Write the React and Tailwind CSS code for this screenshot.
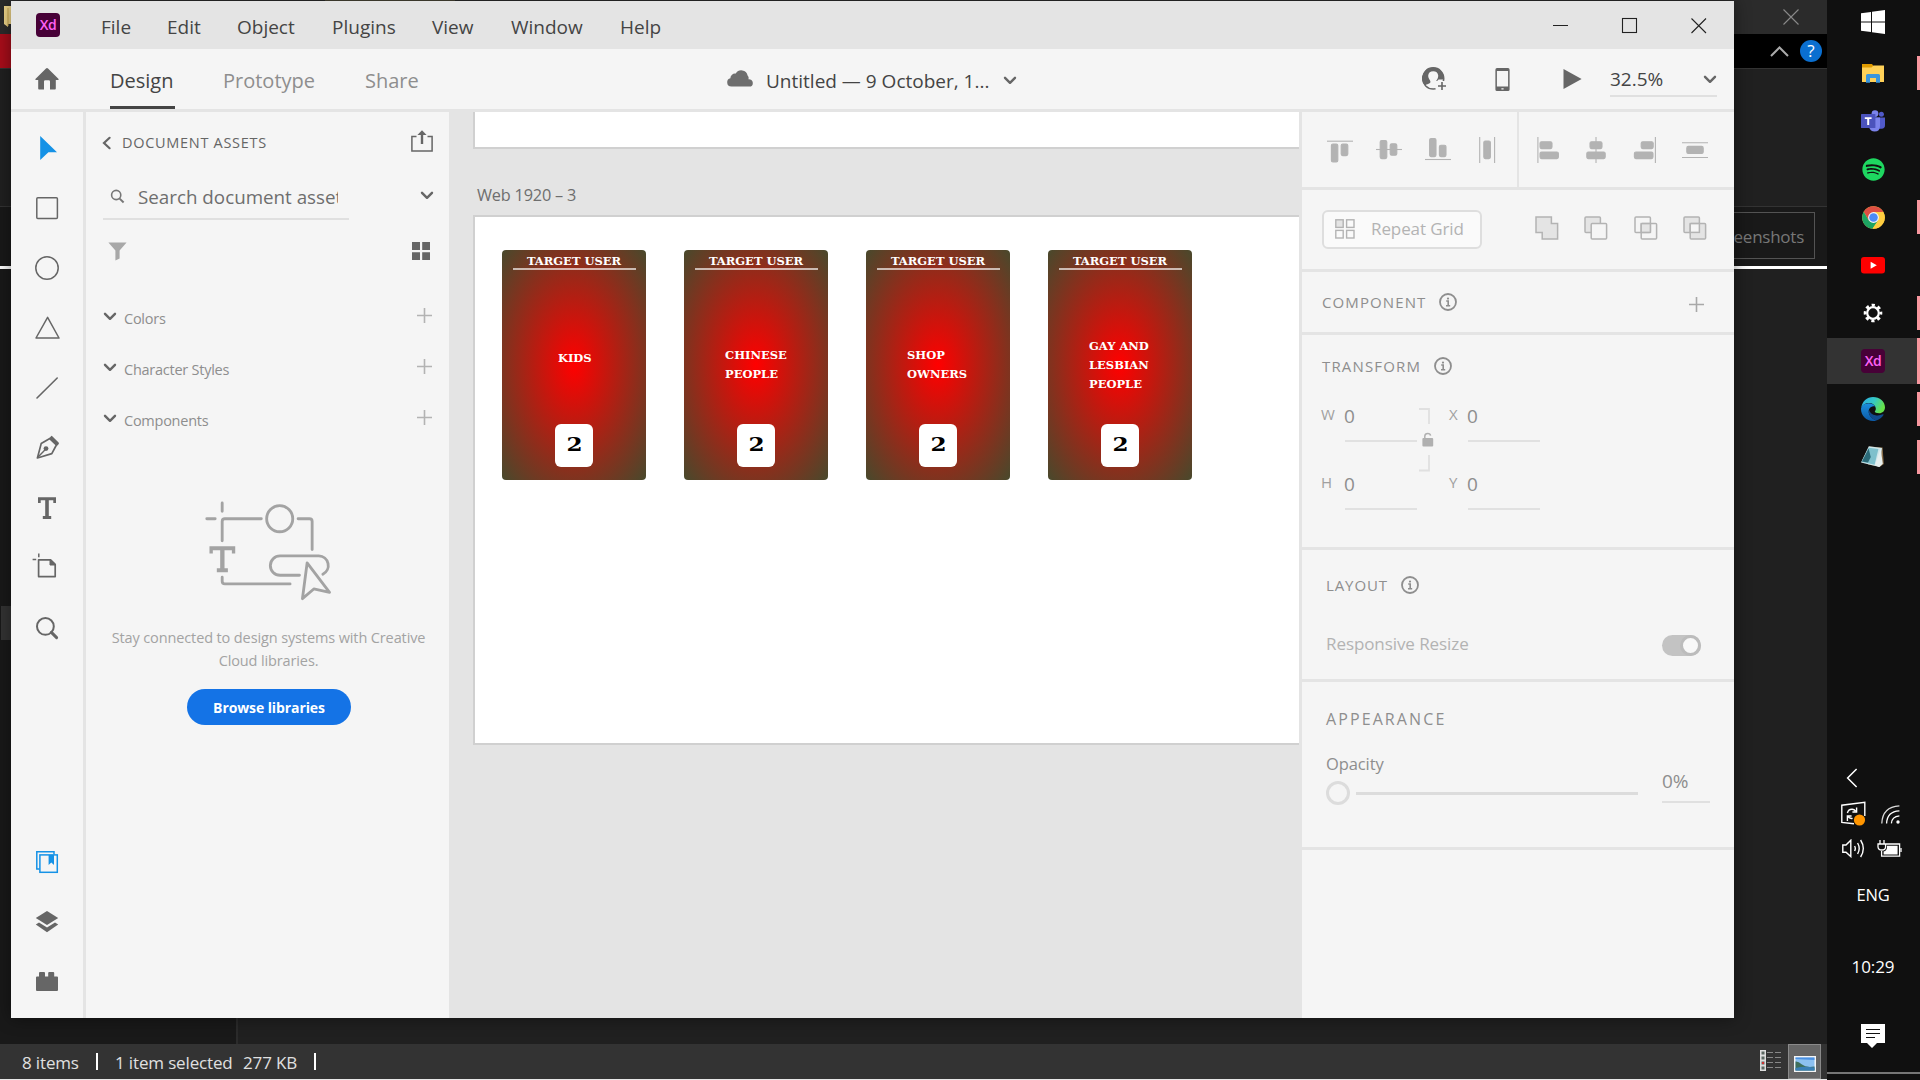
import React from 'react';
import { FaSpotify } from 'react-icons/fa';

const Chevron = ({ className }) => (
  <svg className={className} width="14" height="9" viewBox="0 0 14 9" fill="none" stroke="#666" strokeWidth="2.4" strokeLinecap="round" strokeLinejoin="round">
    <path d="M2 1.8 7 6.8 12 1.8" />
  </svg>
);

const Plus = ({ className, color = '#b3b3b3' }) => (
  <svg className={className} width="15" height="15" viewBox="0 0 15 15" stroke={color} strokeWidth="1.6">
    <path d="M7.5 0V15M0 7.5H15" />
  </svg>
);

const Info = () => (
  <svg width="18" height="18" viewBox="0 0 18 18" fill="none">
    <circle cx="9" cy="9" r="8" stroke="#8e8e8e" strokeWidth="1.8" />
    <circle cx="9" cy="5.6" r="1.1" fill="#8e8e8e" />
    <path d="M7.2 8H9.2V12.6M7 12.8H11.2" stroke="#8e8e8e" strokeWidth="1.6" />
  </svg>
);

const XdIcon = () => (
  <div className="flex h-6 w-6 shrink-0 items-center justify-center rounded-[4px] bg-[#470137] text-[14px] leading-none font-semibold tracking-[-0.4px] text-[#ff61f6]">
    <span className="-mt-px">Xd</span>
  </div>
);

/* ---------- tool column ---------- */
const s = { fill: 'none', stroke: '#666', strokeWidth: 1.5 };
const TOOLS = [
  <path d="M8.2 3 25 19.2H16.4L8.2 27Z" fill="#1592e6" />,
  <rect x="4.8" y="4.8" width="20.6" height="20.6" rx="1" {...s} />,
  <circle cx="15" cy="15" r="11.2" {...s} />,
  <path d="M15.6 4.4 27 25H4Z" {...s} strokeLinejoin="round" />,
  <path d="M5 25 25.2 5" {...s} strokeWidth="1.6" strokeLinecap="round" />,
  <g transform="translate(0 -1)">
    <path d="M5.4 26 9.2 11.6 17.8 6.6 24.4 13 19.8 21.6Z" {...s} strokeWidth="1.7" strokeLinejoin="round" />
    <path d="M5.6 25.6 13.6 17.2" {...s} strokeWidth="1.4" />
    <circle cx="14" cy="16.6" r="2.4" fill="#666" />
    <path d="M20 4 26.6 10.4Q27.4 11.2 26.6 12.2L24.8 14 17 6.4 18.8 4.4Q19.6 3.6 20 4Z" fill="#666" />
  </g>,
  <path d="M6 4.2H24V10H21.3V7.2H16.8V23H19.2V26H10.8V23H13.2V7.2H8.7V10H6Z" fill="#666" />,
  <g transform="translate(0 -2)">
    <path d="M6.6 8.8H18.6L23.2 13.4V25.6H6.6Z" {...s} strokeWidth="1.7" strokeLinejoin="round" />
    <path d="M18 8.4V14H23.8Z" fill="#666" stroke="#666" />
    <path d="M6.8 2.4V6.2M0.6 8.4H4.2" {...s} />
  </g>,
  <g>
    <circle cx="13.4" cy="13.4" r="8.4" {...s} strokeWidth="2" />
    <path d="M19.4 19.4 24.6 24.6" {...s} strokeWidth="3" strokeLinecap="round" />
  </g>,
];
const BOTTOM_TOOLS = [
  <g fill="none" stroke="#1592e6" strokeWidth="1.5">
    <path d="M7.6 22H4.8V4.8H22V7.6" />
    <rect x="7.9" y="7.9" width="17.4" height="17.4" />
    <path d="M16.6 8H22V18L19.3 15.6 16.6 18Z" fill="#1592e6" stroke="none" />
  </g>,
  <g fill="#666">
    <path d="M15 4 26.2 11 15 18 3.8 11Z" />
    <path d="M3.8 17.4 7 15.4 15 20.6 23 15.4 26.2 17.4 15 25.2Z" />
  </g>,
  <path d="M4 10.5Q4 9.5 5 9.5H7V6Q7 5 8 5H12Q13 5 13 6V9.5H16.2V6Q16.2 5 17.2 5H21.2Q22.2 5 22.2 6V9.5H25Q26 9.5 26 10.5V23Q26 24 25 24H5Q4 24 4 23Z" fill="#666" />,
];
const ToolCell = ({ children }) => (
  <div className="flex h-[60px] items-center justify-center">
    <svg width="30" height="30" viewBox="0 0 30 30">{children}</svg>
  </div>
);

/* ---------- alignment icons ---------- */
const ALIGN_V = [
  <g><path d="M0 4.2H26" /><rect x="4.4" y="7" width="6.4" height="18" rx="1.5" /><rect x="14.2" y="7" width="6.6" height="11.6" rx="1.5" /></g>,
  <g><path d="M0 12.5H26" /><rect x="4.2" y="3.6" width="6.6" height="18" rx="1.5" /><rect x="14.2" y="6.8" width="6.6" height="11.4" rx="1.5" /></g>,
  <g><path d="M0 22.5H26" /><rect x="4.6" y="1.6" width="6.4" height="18" rx="1.5" /><rect x="14.4" y="8.2" width="6.6" height="11.4" rx="1.5" /></g>,
  <g><path d="M5.7 0V26M20.6 0V26" /><rect x="9.8" y="4" width="6.6" height="17.6" rx="1.5" /></g>,
];
const ALIGN_H = [
  <g><path d="M2.9 0V26" /><rect x="5" y="4.8" width="12" height="6.8" rx="1.5" /><rect x="5" y="15" width="18.4" height="6.6" rx="1.5" /></g>,
  <g><path d="M12 0V26" /><rect x="6" y="4.8" width="12" height="6.8" rx="1.5" /><rect x="2.8" y="15" width="18.4" height="6.6" rx="1.5" /></g>,
  <g><path d="M22.4 0V26" /><rect x="8.2" y="4.8" width="12" height="6.8" rx="1.5" /><rect x="1.4" y="15" width="18.6" height="6.6" rx="1.5" /></g>,
  <g><path d="M0 5.8H26M0 20.5H26" /><rect x="4.8" y="9.4" width="16.4" height="7" rx="1.5" /></g>,
];
const AlignCell = ({ children }) => (
  <div className="flex w-[49px] items-center justify-center">
    <svg width="26" height="26" viewBox="0 0 26 26" fill="#b3b3b3" stroke="#b3b3b3" strokeWidth="1.1">
      {children}
    </svg>
  </div>
);

const BOOL = [
  <path d="M1 1H16.4V7.6H22.6V23H7.2V16.4H1Z" fill="#e4e4e4" />,
  <g><rect x="1" y="1" width="15.4" height="15.4" rx="1" fill="#e4e4e4" /><rect x="7.2" y="7.6" width="15.4" height="15.4" rx="1" fill="#f5f5f5" /></g>,
  <g><rect x="1" y="1" width="15.4" height="15.4" rx="1" /><rect x="7.2" y="7.6" width="15.4" height="15.4" rx="1" /><rect x="7.2" y="7.6" width="9.2" height="8.8" fill="#e4e4e4" /></g>,
  <g><rect x="1" y="1" width="15.4" height="15.4" rx="1" fill="#e4e4e4" /><rect x="7.2" y="7.6" width="15.4" height="15.4" rx="1" fill="#e4e4e4" /><rect x="7.2" y="7.6" width="9.2" height="8.8" fill="#f5f5f5" /></g>,
];

/* ---------- artboard cards ---------- */
const CARDS = [
  { lines: ['KIDS'], pos: 'mt-[79px] ml-[56px]' },
  { lines: ['CHINESE', 'PEOPLE'], pos: 'mt-[76px] ml-[41px]' },
  { lines: ['SHOP', 'OWNERS'], pos: 'mt-[76px] ml-[41px]' },
  { lines: ['GAY AND', 'LESBIAN', 'PEOPLE'], pos: 'mt-[67px] ml-[41px]' },
];
const Card = ({ lines, pos }) => (
  <div className="flex h-[230px] w-36 flex-col rounded-[4px] bg-[radial-gradient(ellipse_farthest-corner_at_center,#ff0000,#48492c)] font-['DejaVu_Serif',serif] text-[11.5px] font-bold text-white">
    <div className="h-[18px] text-center leading-[22px] whitespace-nowrap">TARGET USER</div>
    <div className="mx-auto h-0.5 w-[123px] shrink-0 bg-white/65" />
    <div className={pos}>
      {lines.map((l) => (
        <div key={l} className="leading-[19px] whitespace-nowrap">{l}</div>
      ))}
    </div>
    <div className="mx-auto mt-auto mb-[13px] flex h-[43px] w-[38px] shrink-0 items-center justify-center rounded-[6px] bg-white pb-px text-[18.5px] text-black">
      <span className="scale-x-125 leading-none">2</span>
    </div>
  </div>
);

const Field = ({ label, first }) => (
  <div className="flex h-[68px]">
    <span className={`${first ? 'w-6' : 'w-[19px]'} pt-[4px] text-[15px] leading-[18px] text-[#a0a0a0]`}>{label}</span>
    <span className="h-[41px] w-[72px] border-b-2 border-[#e1e1e1] pt-[5px] text-[19px] leading-5 text-[#8e8e8e]"><span className="-ml-px">0</span></span>
  </div>
);

function TitleBar() {
  return (
    <div className="flex h-12 shrink-0 items-start bg-[#e4e4e4] text-[19px] leading-[52px] text-[#444]">
      <div className="ml-[25px] flex h-12 w-[65px] items-center"><XdIcon /></div>
      <span className="w-[66px]">File</span>
      <span className="w-[70px]">Edit</span>
      <span className="w-[95px]">Object</span>
      <span className="w-[100px]">Plugins</span>
      <span className="w-[79px]">View</span>
      <span className="w-[109px]">Window</span>
      <span>Help</span>
      <svg className="mt-4 mr-[27px] ml-auto" width="156" height="18" viewBox="0 0 156 18" fill="none" stroke="#222" strokeWidth="1.1">
        <path d="M2 8.5H17M140.5 1.5 155 16M155 1.5 140.5 16" />
        <rect x="71.5" y="1.5" width="14" height="14" />
      </svg>
    </div>
  );
}

function Toolbar() {
  return (
    <div className="flex h-[63px] shrink-0 border-b-[3px] border-[#e4e4e4] bg-[#f5f5f5] text-[20px] text-[#8e8e8e]">
      <svg className="mt-[19px] ml-6 shrink-0" width="24" height="22" viewBox="0 0 24 22" fill="#666">
        <path d="M12 0Q12.6 0 13 .5L23.6 11Q24 11.800 23 12H20.800V20.500Q20.800 21.400 20 21.400H15V13.400Q15 12.200 13.800 12.200H10.200Q9 12.200 9 13.400V21.400H4Q3.200 21.400 3.200 20.500V12H1Q0 11.800.4 11L11 .5Q11.400 0 12 0Z" />
      </svg>
      <div className="ml-[51px] h-[60px] w-[65px] border-b-[3px] border-[#444] leading-[64px] whitespace-nowrap text-[#444]">Design</div>
      <span className="ml-[48px] w-[142px] leading-[64px]">Prototype</span>
      <span className="w-[53px] leading-[64px]">Share</span>
      <svg className="mt-[20px] ml-[309px] shrink-0" width="26" height="18" viewBox="0 0 26 18" fill="#6e6e6e">
        <path d="M4.5 17.6A4.4 4.4 0 0 1 .2 13.2 4 4 0 0 1 3.4 9.2 4.6 4.6 0 0 1 8.8 4.6 6.4 6.4 0 0 1 20.6 6.4 3.6 3.6 0 0 1 21.4 10.2 3.8 3.8 0 0 1 25.8 13.8 3.6 3.6 0 0 1 22.4 17.6Z" />
      </svg>
      <span className="ml-[13px] w-[237px] text-[19px] leading-[64px] whitespace-nowrap text-[#444]">Untitled — 9 October, 1...</span>
      <Chevron className="mt-[27px]" />
      <svg className="mt-[18px] ml-auto shrink-0" width="25" height="24" viewBox="0 0 25 24" fill="#666">
        <circle cx="11.2" cy="11.4" r="10.6" fill="none" stroke="#666" strokeWidth="1.4" />
        <path fillRule="evenodd" d="M11.2.6A10.8 10.8 0 0 1 21.9 12.5H16.5L14 15.2C13.6 13.4 16.4 12.4 16.2 8.6 16 5.6 14 4.2 11.2 4.2S6.4 5.6 6.2 8.6C6.2 12.4 8.8 13.4 8.4 15.2 8 16.8 4.8 17 2.9 18.4A10.8 10.8 0 0 1 11.2.6Z" />
        <path d="M12 14H25V24H14Z" fill="#f5f5f5" />
        <path d="M20 15V23M16 19H24" stroke="#666" strokeWidth="1.6" />
      </svg>
      <svg className="mt-[19px] ml-12 shrink-0" width="15" height="24" viewBox="0 0 15 24">
        <path fillRule="evenodd" fill="#666" d="M2 0H13Q14.6 0 14.6 1.8V21.4Q14.6 23 13 23H2Q.4 23 .4 21.4V1.8Q.4 0 2 0ZM1.9 3V18.6H13.1V3ZM6.4 20.2V21.6H8.6V20.2Z" />
      </svg>
      <svg className="mt-5 ml-[53px] shrink-0" width="19" height="20" viewBox="0 0 19 20"><path d="M.5 0 18.6 10 .5 20Z" fill="#666" /></svg>
      <div className="mr-[17px] ml-[28px] flex h-12 w-[107px] border-b-2 border-[#e0e0e0] text-[19px] text-[#444]">
        <span className="leading-[60px]">32.5%</span>
        <Chevron className="mt-[26px] ml-auto" />
      </div>
    </div>
  );
}

function AssetsPanel() {
  return (
    <div className="flex w-[363px] shrink-0 flex-col bg-[#f5f5f5] pr-4 pl-[17px] text-[#8e8e8e]">
      <div className="flex h-[62px] items-center">
        <svg className="-ml-px" width="10" height="14" viewBox="0 0 10 14" fill="none" stroke="#666" strokeWidth="2.2" strokeLinecap="round"><path d="M7.6 1.8 2 7 7.6 12.2" /></svg>
        <span className="ml-[10px] text-[14.5px] tracking-[0.7px] text-[#666]">DOCUMENT ASSETS</span>
        <svg className="-mt-1 ml-auto" width="22" height="22" viewBox="0 0 22 22" fill="none" stroke="#666" strokeWidth="1.5">
          <path d="M5.5 6.4H.9V20.9H21.1V6.4H16.5" />
          <path d="M11 14V4" strokeWidth="2.4" />
          <path d="M11 .2 15.6 5H6.4Z" fill="#666" stroke="none" />
        </svg>
      </div>
      <div className="flex h-[46px]">
        <div className="flex w-[246px] border-b-2 border-[#e0e0e0]">
          <svg className="mt-[15px] ml-[7px] shrink-0" width="15" height="15" viewBox="0 0 15 15" fill="none" stroke="#777" strokeWidth="1.6"><circle cx="6.2" cy="6" r="4.6" /><path d="M9.6 9.6 13.6 13.4" strokeWidth="2" /></svg>
          <span className="ml-[13px] w-[200px] overflow-hidden text-[18.8px] leading-[46px] whitespace-nowrap text-[#6e6e6e]">Search document assets</span>
        </div>
        <Chevron className="-mr-px mt-[17px] ml-auto" />
      </div>
      <div className="flex h-[62px] items-center justify-between pr-[3px] pl-[5px]">
        <svg width="19" height="19" viewBox="0 0 19 19"><path d="M.4.4H18.6L11.6 8.6V16.6L7.4 18.6V8.6Z" fill="#a8a8a8" /></svg>
        <svg className="-mt-px" width="18" height="18" viewBox="0 0 18 18" fill="#666"><path d="M0 0H8V8H0ZM10.2 0H18V8H10.2ZM0 10.2H8V18H0ZM10.2 10.2H18V18H10.2Z" /></svg>
      </div>
      <div className="mt-[11px]">
        {['Colors', 'Character Styles', 'Components'].map((t) => (
          <div key={t} className="flex h-[51px] items-center">
            <Chevron className="-mt-[5px]" />
            <span className="ml-[7px] text-[14.5px] tracking-[-0.25px]">{t}</span>
            <Plus className="mr-px -mt-[6px] ml-auto" />
          </div>
        ))}
      </div>
      <svg className="mt-[54px] ml-[101px] shrink-0" width="129" height="102" viewBox="610 600 385 305" fill="none" stroke="#a3a3a3" strokeWidth="8.5" strokeLinecap="round" strokeLinejoin="round">
        <path d="M664 609V634M618 656H643M664 722V664Q664 656 672 656H781M891 656H925Q933 656 933 664V748M664 831V843Q664 851 672 851H867" />
        <circle cx="836" cy="656" r="39" />
        <path d="M895 825H837A29 29 0 0 1 837 767H953A29 29 0 0 1 965 822" />
        <path d="M918 788 985 876 938 866 904 895Z" />
        <path d="M626 738H703V760H693V750H671V804H681V816H648V804H658V750H636V760H626Z" fill="#a3a3a3" stroke="none" />
      </svg>
      <div className="mt-[24px] -mr-[5px] -ml-1 text-center text-[14.5px] leading-[23px] tracking-[-0.12px] whitespace-nowrap text-[#a3a3a3]">
        <div>Stay connected to design systems with Creative</div>
        <div>Cloud libraries.</div>
      </div>
      <div className="mt-[17px] ml-[84px] h-9 w-[164px] shrink-0 rounded-full bg-[#1473e6] text-center text-[14px] leading-[37px] font-bold tracking-[-0.1px] text-white">Browse libraries</div>
    </div>
  );
}

function Canvas() {
  return (
    <div className="w-[850px] shrink-0 overflow-hidden bg-[#e4e4e4] pl-6">
      <div className="h-[37px] w-[826px] border-b-2 border-l-2 border-[#d0d0d0] bg-white" />
      <div className="h-[66px] pt-[34px] pl-[4px] text-[16.3px] leading-6 tracking-[-0.2px] text-[#6e6e6e]">Web 1920 – 3</div>
      <div className="h-[530px] w-[826px] border-y-2 border-l-2 border-[#d0d0d0] bg-white">
        <div className="flex gap-[38px] pt-[33px] pl-[27px]">
          {CARDS.map((c) => <Card key={c.lines.join()} {...c} />)}
        </div>
      </div>
    </div>
  );
}

function Inspector() {
  return (
    <div className="flex w-[435px] shrink-0 flex-col border-l-[3px] border-[#e4e4e4] bg-[#f5f5f5] text-[#8e8e8e]">
      <div className="flex h-[78px] border-b-[3px] border-[#e4e4e4]">
        <div className="flex w-[217px] border-r-2 border-[#e4e4e4] pl-[13px]">{ALIGN_V.map((a, i) => <AlignCell key={i}>{a}</AlignCell>)}</div>
        <div className="flex pl-[4px]">{ALIGN_H.map((a, i) => <AlignCell key={i}>{a}</AlignCell>)}</div>
      </div>
      <div className="flex h-[82px] items-start border-b-[3px] border-[#e4e4e4] pt-5 pl-5">
        <div className="flex h-[39px] w-[160px] items-center rounded-[6px] border-2 border-[#dedede] bg-[#fafafa] pb-[2px] pl-[11px]">
          <svg width="20" height="20" viewBox="0 0 20 20" fill="none" stroke="#b3b3b3" strokeWidth="1.4">
            <rect x=".8" y=".8" width="7.4" height="7.6" fill="#e4e4e4" /><rect x="11.6" y=".8" width="7.4" height="7.6" /><rect x=".8" y="11.4" width="7.4" height="7.6" /><rect x="11.6" y="11.4" width="7.4" height="7.6" />
          </svg>
          <span className="ml-4 text-[17px] tracking-[-0.1px] whitespace-nowrap text-[#b3b3b3]">Repeat Grid</span>
        </div>
        <div className="mt-[6px] ml-[53px] flex gap-[25.3px]">
          {BOOL.map((b, i) => (
            <svg key={i} width="24" height="24" viewBox="0 0 24 24" fill="none" stroke="#b3b3b3" strokeWidth="1.5">{b}</svg>
          ))}
        </div>
      </div>
      <div className="flex h-[63px] items-center border-b-[3px] border-[#e4e4e4] pr-[30px] pl-5">
        <span className="mr-[13px] text-[15px] tracking-[1.1px]">COMPONENT</span>
        <Info />
        <Plus className="mt-1 ml-auto" color="#a8a8a8" />
      </div>
      <div className="h-[215px] border-b-[3px] border-[#e4e4e4] pl-5">
        <div className="flex h-[62px] items-center">
          <span className="mr-[13px] text-[15px] tracking-[1.15px]">TRANSFORM</span>
          <Info />
        </div>
        <div className="flex pt-[4px]">
          <div className="-ml-px"><Field label="W" first /><Field label="H" first /></div>
          <svg className="mt-[7px] mr-[15px] ml-[2px] shrink-0" width="15" height="66" viewBox="0 0 15 66" fill="none">
            <path d="M0 1H10V16M10 47V62.500H0" stroke="#e0e0e0" strokeWidth="1.8" />
            <rect x="3.4" y="30" width="10.8" height="8.4" rx="1" fill="#b0b0b0" />
            <path d="M5.8 31V28Q6 25.6 8.8 25.6 11.2 25.6 11.6 27.6" stroke="#b0b0b0" strokeWidth="1.5" />
          </svg>
          <div><Field label="X" /><Field label="Y" /></div>
        </div>
      </div>
      <div className="h-[132px] border-b-[3px] border-[#e4e4e4] pr-[33px] pl-6">
        <div className="flex h-[70px] items-center">
          <span className="mr-[13px] text-[15px] tracking-[0.9px]">LAYOUT</span>
          <Info />
        </div>
        <div className="flex h-12 items-center justify-between">
          <span className="text-[17px] tracking-[-0.08px] text-[#b3b3b3]">Responsive Resize</span>
          <div className="mt-[3px] flex h-[21px] w-[39px] justify-end rounded-full bg-[#c3c3c3]">
            <div className="h-[21px] w-[21px] rounded-full border-[3px] border-[#bcbcbc] bg-[#f8f8f8]" />
          </div>
        </div>
      </div>
      <div className="h-[168px] border-b-[3px] border-[#e4e4e4] pl-6">
        <div className="pt-[25px] text-[16px] leading-6 tracking-[2.1px]">APPEARANCE</div>
        <div className="mt-[16px] flex">
          <div className="w-[312px]">
            <div className="pt-[5px] text-[16.5px] leading-6 tracking-[-0.1px]">Opacity</div>
            <div className="mt-[5px] flex items-center">
              <div className="h-6 w-6 rounded-full border-[3px] border-[#dcdcdc]" />
              <div className="mt-px ml-[6px] h-[3px] w-[282px] bg-[#dcdcdc]" />
            </div>
          </div>
          <div className="ml-6 h-14 w-12 border-b-2 border-[#e0e0e0] pt-[22px] text-[19px] leading-6">0%</div>
        </div>
      </div>
    </div>
  );
}

/* ---------- desktop taskbar ---------- */
const APPS = [
  { n: 'files', bar: true, icon: (
    <svg width="24" height="24" viewBox="0 0 24 24"><path d="M1 3H11L12.5 5V8H1Z" fill="#e09b00" /><path d="M1 6.5H10.5L12.5 4.5H23V21H1Z" fill="#ffd158" /><path d="M5 21.8V14.5Q5 13 6.5 13H17.5Q19 13 19 14.5V21.8H15V17H9V21.8Z" fill="#3a96dd" /></svg>) },
  { n: 'teams', icon: (
    <svg width="24" height="24" viewBox="0 0 24 24"><circle cx="14" cy="4.6" r="3.4" fill="#7b83eb" /><circle cx="20.4" cy="5.2" r="2.5" fill="#5059c9" /><path d="M14 8.6H24V16Q24 19.8 20.6 19.8H14Z" fill="#5059c9" /><path d="M8 8.6H19V17Q19 22.6 13.6 22.6 9.4 22.6 8 18Z" fill="#7b83eb" /><rect x="0" y="5" width="14.4" height="14" rx=".6" fill="#4b53bc" /><path d="M3.8 8.2H10.6V10H8.2V16H6.2V10H3.8Z" fill="#fff" /></svg>) },
  { n: 'spotify', icon: <FaSpotify className="h-[23px] w-[23px] text-[#1ed760]" /> },
  { n: 'chrome', bar: true, icon: (
    <svg width="23" height="23" viewBox="0 0 23 23"><circle cx="11.5" cy="11.5" r="11.3" fill="#ffcd40" /><path d="M1.7 5.8A11.3 11.3 0 0 1 21.3 6H11.5L6.7 14.2Z" fill="#de4f43" /><path d="M1.7 5.8A11.3 11.3 0 0 0 10.4 22.8L16.3 14.3 6.7 14.2Z" fill="#1da462" /><path d="M11.5 6H21.3A11.3 11.3 0 0 1 10.6 22.8L16.3 14.2Z" fill="#ffcd40" /><circle cx="11.5" cy="11.5" r="5.4" fill="#f4f4f4" /><circle cx="11.5" cy="11.5" r="4.3" fill="#4c8bf5" /></svg>) },
  { n: 'youtube', icon: (
    <svg width="24" height="17" viewBox="0 0 24 17"><rect width="24" height="16.6" rx="3" fill="#f00" /><path d="M9.6 4.8 15.8 8.3 9.6 11.8Z" fill="#fff" /></svg>) },
  { n: 'settings', bar: true, icon: (
    <svg width="20" height="20" viewBox="0 0 20 20" fill="none" stroke="#fff"><circle cx="10" cy="10" r="5.8" strokeWidth="2.2" /><circle cx="10" cy="10" r="7.9" strokeWidth="2.8" strokeDasharray="3.2 3.005" strokeDashoffset="1.6" /></svg>) },
  { n: 'xd', bar: true, active: true, icon: <XdIcon /> },
  { n: 'edge', bar: true, icon: (
    <svg width="24" height="24" viewBox="0 0 24 24">
      <defs>
        <linearGradient id="eg" x1="0" y1="0" x2="1" y2=".4"><stop offset="0" stopColor="#2aa8e8" /><stop offset=".55" stopColor="#35c9c4" /><stop offset="1" stopColor="#66e24a" /></linearGradient>
        <linearGradient id="eb" x1="0" y1="0" x2="0" y2="1"><stop offset="0" stopColor="#1b8fe0" /><stop offset="1" stopColor="#0c59a4" /></linearGradient>
      </defs>
      <path d="M.3 10.6C1 4.6 6 0 12 0 18.8 0 24 4.6 24 10.2 24 14 21.4 16.2 18.2 16.2 15.4 16.2 13.6 15.2 13.8 14.2 14.6 13.4 14.9 12.4 14.8 11.4 14.4 8 11.2 6 7.8 6 4.6 6 1.6 7.8.3 10.6Z" fill="url(#eg)" />
      <path d="M0 12C0 9 3.4 6.2 7.6 6.2 10.6 6.2 13.2 7.6 14.3 9.6 12.6 8.6 9.6 9.2 8.2 12 6.4 16 9.4 21.6 15.4 23.4 14.3 23.8 13.2 24 12 24 5.4 24 0 18.6 0 12Z" fill="url(#eb)" />
      <path d="M8 12.4C6.8 17 10.2 22.2 15.4 23.4 18.6 22.4 21 20.4 22.5 17.9 22.8 17.3 22.3 17 21.8 17.3 16.4 19.8 9.2 18 8 12.4Z" fill="#114a8b" />
    </svg>) },
  { n: 'notepad', bar: true, icon: (
    <svg width="24" height="24" viewBox="0 0 24 24"><path d="M8 1.4 21.6 2.6 22.800 19 19 21.800 7 19.400Z" fill="#8a6f4a" /><path d="M7.8 1.2 21 3 18.4 22 0 17.6Z" fill="#cfe6ea" /><path d="M7.8 2.8 17.4 4 13.6 19.8 .6 16.800Z" fill="#7fc0cc" /><path d="M7.6 3.4 9.8 12 7 17.400 1 16.4Z" fill="#2b6a78" /><path d="M19.6 3.2 21.8 18.800 18.4 22 14 20.200Z" fill="#e6eeee" /></svg>) },
];

function Taskbar() {
  return (
    <div className="flex w-[93px] shrink-0 flex-col bg-[#101010] text-white">
      <div className="flex h-11 shrink-0 items-center justify-center pr-px">
        <svg width="24" height="24" viewBox="0 0 24 24" fill="#fff"><path d="M0 3.3 10 2V11.4H0ZM11 1.8 24 0V11.4H11ZM0 12.5H10V22L0 20.8ZM11 12.5H24V24L11 22.2Z" /></svg>
      </div>
      <div className="mt-[6px] flex flex-col gap-0.5">
        {APPS.map((a) => (
          <div key={a.n} className={`flex h-[46px] items-center ${a.active ? 'bg-[#333]' : ''}`}>
            <div className="flex w-[90px] items-center justify-center pl-[2px]">{a.icon}</div>
            {a.bar && <div className={`w-[3px] bg-[#f8979f] ${a.active ? 'h-[46px]' : 'h-[34px]'}`} />}
          </div>
        ))}
      </div>
      <svg className="mt-[288px] ml-[19px] shrink-0" width="12" height="20" viewBox="0 0 12 20" fill="none" stroke="#fff" strokeWidth="1.5"><path d="M10.6 1 1.6 10 10.6 19" /></svg>
      <div className="mt-[13px] ml-[14px] flex items-center gap-[15px]">
        <svg width="25" height="25" viewBox="0 0 25 25" fill="none" stroke="#fff" strokeWidth="1.4">
          <path d="M13 22.8 .8 21.4V4.2L23.8 1.2V15" />
          <path d="M6.4 12Q7.4 8 11.2 8.2 13.2 8.4 14.6 10M15.6 6.6V11H11.4M15.8 13M6.4 20V15H10.6M7 15.4Q8.4 17.8 11.6 17.4" />
          <circle cx="18.5" cy="19" r="5.6" fill="#ff9500" stroke="none" />
        </svg>
        <svg className="mt-[2px]" width="19" height="19" viewBox="0 0 19 19" fill="none" stroke="#fff" strokeWidth="1.3"><path d="M.8 18.4Q1.4 1.8 18.4.8" opacity=".85" /><path d="M5.6 18.4Q6 6.4 18.4 5.8M10.4 18.4Q10.8 11.4 18.4 10.8" /><circle cx="17" cy="17" r="1.7" fill="#fff" stroke="none" /></svg>
      </div>
      <div className="mt-[13px] ml-[15px] flex items-center gap-[12px]">
        <svg width="23" height="19" viewBox="0 0 23 19" fill="none" stroke="#fff" strokeWidth="1.4"><path d="M.8 6H4L8.8 1.2V17.6L4 13.2H.8Z" /><path d="M12.6 7Q14 9.5 12.6 12M15.6 4Q18.8 9.5 15.6 15M18.6 1Q24 9.5 18.6 18" /></svg>
        <svg width="25" height="18" viewBox="0 0 25 18" fill="none" stroke="#fff" strokeWidth="1.3"><path d="M8.600 4H22.6V16.2H4.6V11M3 0V4M7 0V4M1 4H8.6V7Q8.4 10 4.8 10 1.2 10 1 7Z" /><path d="M10 5.8H20.600V14.4H6.6V11.6Q10 10.6 10 7Z" fill="#fff" stroke="none" /><path d="M24 8V12" /></svg>
      </div>
      <div className="mt-[25px] pr-px text-center text-[16.5px] leading-6 tracking-[-0.2px]">ENG</div>
      <div className="mt-[48px] pr-px text-center text-[17px] leading-6 tracking-[-0.1px]">10:29</div>
      <svg className="mt-[45px] ml-[34px] shrink-0" width="24" height="24" viewBox="0 0 24 24"><path d="M0 0H24V19H16L11 24 6 19H0Z" fill="#fff" /><path d="M5 5.5H19M5 9.5H19M5 13.5H14" stroke="#111" strokeWidth="1.1" /></svg>
      <div className="mt-auto mb-[6px] h-0.5 shrink-0 bg-[#777]" />
    </div>
  );
}

function Explorer() {
  return (
    <div className="flex w-[1827px] shrink-0 flex-col bg-[#202020]">
      <div className="flex h-[34px] shrink-0 items-start bg-[#2b2b2b]">
        <svg className="mt-[6px] ml-[4px]" width="8" height="21" viewBox="0 0 8 21"><path d="M0 0H8V18H4V21L0 18Z" fill="#f0d68a" /><path d="M4 2V20" stroke="#c9a64e" /></svg>
        <div className="ml-[313px] h-px w-[130px] bg-[#4b4737]" />
        <svg className="mt-[9px] mr-[28px] ml-auto" width="16" height="16" viewBox="0 0 16 16" stroke="#8a8a8a" strokeWidth="1.1"><path d="M.5.5 15.5 15.5M15.5.5.5 15.5" /></svg>
      </div>
      <div className="flex h-[34px] shrink-0 items-center bg-black">
        <div className="h-[34px] w-[11px] bg-[#a80d1a]" />
        <svg className="mr-[11px] ml-auto" width="19" height="11" viewBox="0 0 19 11" fill="none" stroke="#aaa" strokeWidth="2"><path d="M1 10 9.5 1.5 18 10" /></svg>
        <div className="mr-[5px] h-[22px] w-[22px] rounded-full bg-[#0a6fd0] text-center text-[17px] leading-[22px] text-white">?</div>
      </div>
      <div className="h-[139px] shrink-0 border-y border-[#333]" />
      <div className="flex h-[59px] shrink-0 justify-end bg-[#191919] pt-[5px] pr-3">
        <div className="h-[47px] w-[200px] border border-[#535353] pr-[10px] text-right text-[17px] leading-[48px] tracking-[-0.25px] text-[#777]">Search Screenshots</div>
      </div>
      <div className="h-[3px] shrink-0 bg-white" />
      <div className="flex flex-1">
        <div className="w-[238px] border-r-2 border-[#2b2b2b] bg-[#191919] pt-[337px]"><div className="ml-px h-[34px] w-5 bg-[#333]" /></div>
      </div>
      <div className="flex h-9 shrink-0 items-center border-b border-[#e8e8e8] bg-[#333] pl-[22px] text-[17px] tracking-[-0.15px] text-[#e0e0e0]">
        <span className="w-[74px] pt-[3px]">8 items</span>
        <div className="h-[17px] w-0.5 bg-white" />
        <span className="ml-[17px] w-[128px] pt-[3px]">1 item selected</span>
        <span className="w-[71px] pt-[3px]">277 KB</span>
        <div className="h-[17px] w-0.5 bg-white" />
        <svg className="mr-[7px] -mt-[3px] ml-auto" width="21" height="21" viewBox="0 0 21 21"><path d="M0 0H6V21H0Z" fill="#ddd" /><path d="M1.5 1.5H4.5V4.5H1.5ZM1.5 6.5H4.5V9.5H1.5ZM1.5 11.5H4.5V14.5H1.5ZM1.5 16.5H4.5V19.5H1.5Z" fill="#5a6660" /><path d="M2 12H4V14H2Z" fill="#c33" /><path d="M7 2.5H13M15 2.5H21M7 7.5H13M15 7.5H21M7 12.5H13M15 12.5H21M7 17.5H13M15 17.5H21" stroke="#888" /></svg>
        <div className="mr-[6px] flex h-[35px] w-[33px] items-center justify-center border border-[#8a8a8a] bg-[#666]">
          <svg className="mt-1 ml-px" width="22" height="16" viewBox="0 0 22 16"><rect width="22" height="16" fill="#f4f4f4" /><rect x="1.5" y="1.5" width="19" height="13" fill="#8cc0f0" /><path d="M1.5 1.5H20.5V4L1.5 3Z" fill="#4a90e2" /><path d="M1.5 5.5Q4 5 8 8.500T20.5 10.500V14.5H1.5Z" fill="#3f6f5c" /><path d="M1.5 12Q10 10 20.5 11.500V14.5H1.5Z" fill="#3a7fb5" /></svg>
        </div>
      </div>
    </div>
  );
}

export default function App() {
  return (
    <div className="relative flex h-[1080px] w-[1920px] overflow-hidden bg-black font-['Open_Sans','Noto_Sans',sans-serif]">
      <Explorer />
      <Taskbar />
      <div className="absolute top-px left-[11px] flex h-[1017px] w-[1723px] flex-col overflow-hidden shadow-[0_0_16px_rgba(0,0,0,0.45)]">
        <TitleBar />
        <Toolbar />
        <div className="flex min-h-0 flex-1">
          <div className="flex w-[75px] shrink-0 flex-col border-r-[3px] border-[#e4e4e4] bg-[#f5f5f5] py-[6px]">
            {TOOLS.map((t, i) => <ToolCell key={i}>{t}</ToolCell>)}
            <div className="flex-1" />
            {BOTTOM_TOOLS.map((t, i) => <ToolCell key={i}>{t}</ToolCell>)}
          </div>
          <AssetsPanel />
          <Canvas />
          <Inspector />
        </div>
      </div>
    </div>
  );
}
